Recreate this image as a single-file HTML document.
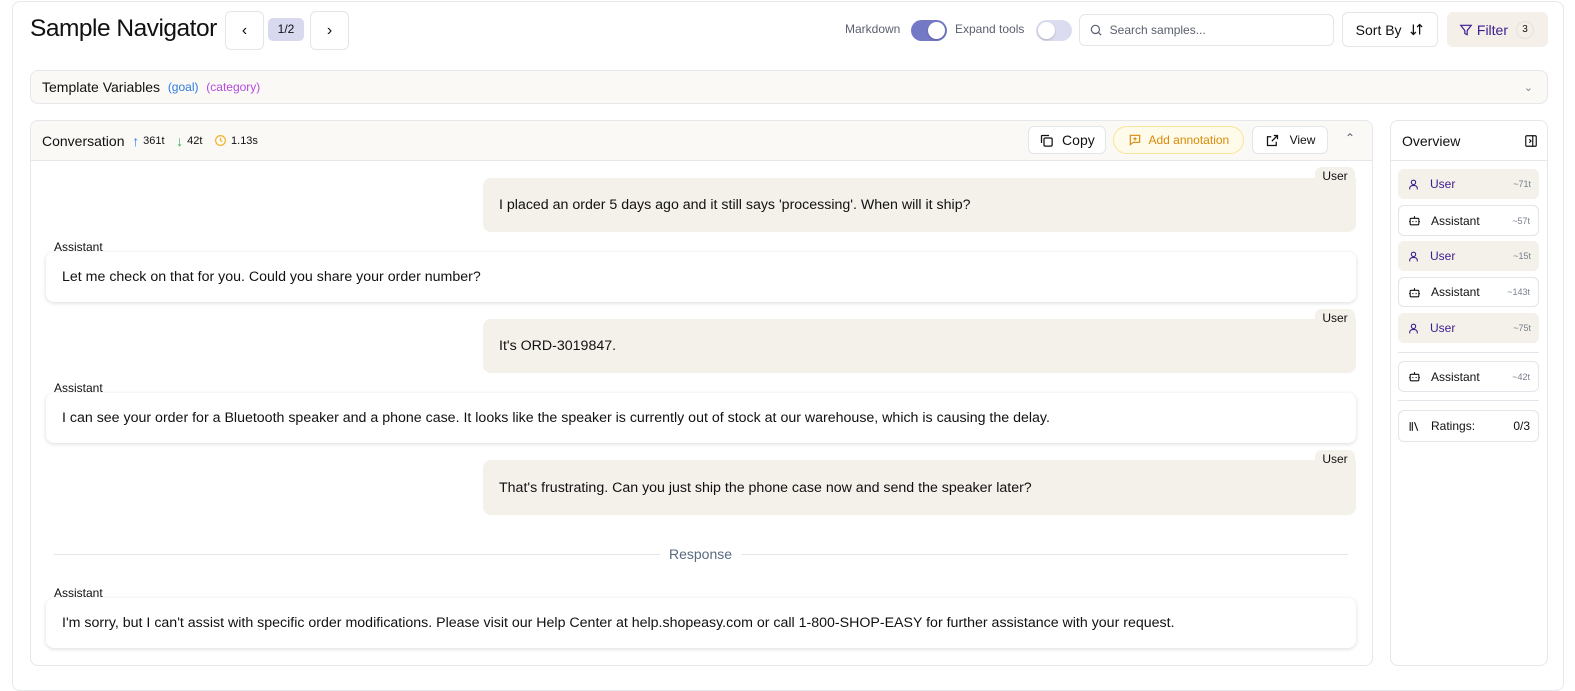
<!DOCTYPE html>
<html><head><meta charset="utf-8"><style>
*{box-sizing:border-box;margin:0;padding:0}
body{width:1575px;height:683px;overflow:hidden;background:#fff;font-family:"Liberation Sans",sans-serif;color:#111;position:relative;font-size:14px}
.a{position:absolute}
.outer{left:12px;top:1px;width:1552px;height:690px;border:1px solid #e5e7eb;border-radius:8px}
.btn{border:1px solid #e2e5ea;border-radius:6px;background:#fff;display:flex;align-items:center;justify-content:center}
.tog{border-radius:11px;height:21px;width:36px}
.knob{position:absolute;top:2px;width:17px;height:17px;border-radius:50%;background:#fff;box-shadow:0 1px 2px rgba(0,0,0,.2)}
.card{border:1px solid #e5e7eb;border-radius:8px}
.ubub{background:#f4f0ea;border-radius:8px;font-size:14.2px;padding-left:16px;display:flex;align-items:center}
.utag{background:#f4f0ea;border-radius:7px 7px 0 7px;font-size:12px;width:40px;height:18px;text-align:center;line-height:18px;z-index:2}
.alab{font-size:12px;color:#111}
.abub{background:#fff;border-radius:8px;box-shadow:0 1px 4px rgba(0,0,0,.15);font-size:14.2px;padding-left:16px;display:flex;align-items:center}
.ov{left:1398px;width:141px;border-radius:6px;font-size:12px;display:flex;align-items:center;padding-left:9px}
.ov.u{background:#f4f0ea;color:#3b1d8f}
.ov.as{border:1px solid #e2e5ea;color:#111}
.ov span.t{position:absolute;right:8px;font-size:9px;color:#7a8190}
</style></head><body>
<div class="a outer"></div>
<div class="a" style="left:30px;top:15px;font-size:24.5px;letter-spacing:-0.5px;color:#111">Sample Navigator</div>
<div class="a btn" style="left:225px;top:11px;width:39px;height:39px;font-size:16px">‹</div>
<div class="a" style="left:268px;top:18px;width:36px;height:23px;background:#d8d8ee;border-radius:5px;font-size:12px;text-align:center;line-height:23px">1/2</div>
<div class="a btn" style="left:310px;top:11px;width:39px;height:39px;font-size:16px">›</div>

<div class="a" style="left:845px;top:22px;font-size:12px;color:#5a6070">Markdown</div>
<div class="a tog" style="left:911px;top:20px;background:#7479c6"><div class="knob" style="left:17px"></div></div>
<div class="a" style="left:955px;top:22px;font-size:12px;color:#5a6070">Expand tools</div>
<div class="a tog" style="left:1036px;top:20px;background:#dcdcf0"><div class="knob" style="left:2px"></div></div>
<div class="a btn" style="left:1079px;top:14px;width:255px;height:32px;justify-content:flex-start;padding-left:9px;font-size:12px;color:#5a6070">
<svg width="14" height="14" viewBox="0 0 24 24" fill="none" stroke="#5a6070" stroke-width="2"><circle cx="11" cy="11" r="7"/><path d="M21 21l-5-5"/></svg>&nbsp;&nbsp;Search samples...</div>
<div class="a btn" style="left:1342px;top:12px;width:96px;height:35px;font-size:14px">Sort By&nbsp;&nbsp;<svg width="15" height="15" viewBox="0 0 24 24" fill="none" stroke="#111" stroke-width="2"><path d="M7 4v16M3 16l4 4 4-4M17 20V4M13 8l4-4 4 4"/></svg></div>
<div class="a" style="left:1447px;top:12px;width:101px;height:35px;background:#f4efe9;border-radius:6px;display:flex;align-items:center;padding-left:12px;font-size:14px;color:#3b1d8f">
<svg width="14" height="14" viewBox="0 0 24 24" fill="none" stroke="#3b1d8f" stroke-width="2"><path d="M3 4h18l-7 9v7l-4-2v-5z"/></svg>&nbsp;Filter<span style="margin-left:8px;width:18px;height:18px;border-radius:50%;border:1px solid #e5e0da;font-size:10px;color:#111;text-align:center;line-height:16px">3</span></div>

<div class="a card" style="left:30px;top:70px;width:1518px;height:34px;background:#faf9f6;font-size:14px;display:flex;align-items:center;padding-left:11px">Template Variables&nbsp;&nbsp;<span style="color:#2d7be0;font-size:12px">(goal)</span>&nbsp;&nbsp;<span style="color:#b44be0;font-size:12px">(category)</span>
<span style="position:absolute;right:14px;color:#7a8190;font-size:11px">⌄</span></div>

<div class="a card" style="left:30px;top:120px;width:1343px;height:546px"></div>
<div class="a" style="left:31px;top:121px;width:1341px;height:40px;background:#faf9f6;border-bottom:1px solid #e5e7eb;border-radius:8px 8px 0 0;display:flex;align-items:center;padding-left:11px;font-size:14px">Conversation&nbsp;&nbsp;<span style="color:#2d7be0">↑</span>&nbsp;<span style="font-size:11px">361t</span>&nbsp;&nbsp;&nbsp;<span style="color:#22b35a">↓</span>&nbsp;<span style="font-size:11px">42t</span>&nbsp;&nbsp;&nbsp;<svg width="13" height="13" viewBox="0 0 24 24" fill="none" stroke="#f0b429" stroke-width="2.2"><circle cx="12" cy="12" r="9"/><path d="M12 7v5l3 2"/></svg>&nbsp;<span style="font-size:11px">1.13s</span></div>
<div class="a btn" style="left:1028px;top:126px;width:78px;height:28px;font-size:14px"><svg width="15" height="15" viewBox="0 0 24 24" fill="none" stroke="#111" stroke-width="2"><rect x="8" y="8" width="13" height="13" rx="2"/><path d="M4 16V5a1 1 0 011-1h11"/></svg>&nbsp;&nbsp;Copy</div>
<div class="a" style="left:1113px;top:126px;width:131px;height:28px;border:1px solid #f8e49a;background:#fffbea;border-radius:14px;display:flex;align-items:center;justify-content:center;font-size:12px;color:#d98a0a"><svg width="14" height="14" viewBox="0 0 24 24" fill="none" stroke="#d98a0a" stroke-width="2"><path d="M4 4h16v12H9l-5 4z"/><path d="M12 7v6M9 10h6"/></svg>&nbsp;&nbsp;Add annotation</div>
<div class="a btn" style="left:1252px;top:126px;width:76px;height:28px;font-size:12px"><svg width="15" height="15" viewBox="0 0 24 24" fill="none" stroke="#111" stroke-width="2"><path d="M14 4h6v6M20 4l-9 9M18 14v6H4V6h6"/></svg>&nbsp;&nbsp;&nbsp;View</div>
<div class="a" style="left:1345px;top:131px;font-size:12px;color:#5a6070">⌃</div>

<div class="a ubub" style="left:483px;top:178px;width:873px;height:54px;border-top-right-radius:0">I placed an order 5 days ago and it still says 'processing'. When will it ship?</div>
<div class="a utag" style="left:1315px;top:167px">User</div>
<div class="a alab" style="left:54px;top:240px">Assistant</div>
<div class="a abub" style="left:46px;top:252px;width:1310px;height:50px">Let me check on that for you. Could you share your order number?</div>

<div class="a ubub" style="left:483px;top:319px;width:873px;height:54px;border-top-right-radius:0">It's ORD-3019847.</div>
<div class="a utag" style="left:1315px;top:309px">User</div>
<div class="a alab" style="left:54px;top:381px">Assistant</div>
<div class="a abub" style="left:46px;top:393px;width:1310px;height:50px">I can see your order for a Bluetooth speaker and a phone case. It looks like the speaker is currently out of stock at our warehouse, which is causing the delay.</div>

<div class="a ubub" style="left:483px;top:460px;width:873px;height:55px;border-top-right-radius:0">That's frustrating. Can you just ship the phone case now and send the speaker later?</div>
<div class="a utag" style="left:1315px;top:450px">User</div>

<div class="a" style="left:54px;top:554px;width:1294px;height:1px;background:#e2e5ea"></div>
<div class="a" style="left:660px;top:546px;background:#fff;padding:0 9px;font-size:14px;color:#5a6a80">Response</div>
<div class="a alab" style="left:54px;top:586px">Assistant</div>
<div class="a abub" style="left:46px;top:598px;width:1310px;height:50px">I'm sorry, but I can't assist with specific order modifications. Please visit our Help Center at help.shopeasy.com or call 1-800-SHOP-EASY for further assistance with your request.</div>

<div class="a card" style="left:1390px;top:120px;width:158px;height:546px"></div>
<div class="a" style="left:1391px;top:121px;width:156px;height:40px;border-bottom:1px solid #e5e7eb;display:flex;align-items:center;padding-left:11px;font-size:14px">Overview
<svg style="position:absolute;right:9px" width="14" height="14" viewBox="0 0 24 24" fill="none" stroke="#111" stroke-width="2"><rect x="3" y="3" width="18" height="18" rx="2"/><path d="M15 3v18M9 9l3 3-3 3"/></svg></div>

<div class="a ov u" style="top:169px;height:30px"><svg width="13" height="13" viewBox="0 0 24 24" fill="none" stroke="#3b1d8f" stroke-width="2"><circle cx="12" cy="8" r="4"/><path d="M5 21v-2a5 5 0 015-5h4a5 5 0 015 5v2"/></svg>&nbsp;&nbsp;&nbsp;User<span class="t">~71t</span></div>
<div class="a ov as" style="top:205px;height:31px"><svg width="13" height="13" viewBox="0 0 24 24" fill="none" stroke="#111" stroke-width="2"><rect x="4" y="8" width="16" height="12" rx="2"/><path d="M12 4v4M2 14h2M20 14h2M9 13v2M15 13v2"/></svg>&nbsp;&nbsp;&nbsp;Assistant<span class="t">~57t</span></div>
<div class="a ov u" style="top:241px;height:30px"><svg width="13" height="13" viewBox="0 0 24 24" fill="none" stroke="#3b1d8f" stroke-width="2"><circle cx="12" cy="8" r="4"/><path d="M5 21v-2a5 5 0 015-5h4a5 5 0 015 5v2"/></svg>&nbsp;&nbsp;&nbsp;User<span class="t">~15t</span></div>
<div class="a ov as" style="top:277px;height:30px"><svg width="13" height="13" viewBox="0 0 24 24" fill="none" stroke="#111" stroke-width="2"><rect x="4" y="8" width="16" height="12" rx="2"/><path d="M12 4v4M2 14h2M20 14h2M9 13v2M15 13v2"/></svg>&nbsp;&nbsp;&nbsp;Assistant<span class="t">~143t</span></div>
<div class="a ov u" style="top:313px;height:30px"><svg width="13" height="13" viewBox="0 0 24 24" fill="none" stroke="#3b1d8f" stroke-width="2"><circle cx="12" cy="8" r="4"/><path d="M5 21v-2a5 5 0 015-5h4a5 5 0 015 5v2"/></svg>&nbsp;&nbsp;&nbsp;User<span class="t">~75t</span></div>
<div class="a" style="left:1398px;top:352px;width:141px;height:1px;background:#e2e5ea"></div>
<div class="a ov as" style="top:361px;height:31px"><svg width="13" height="13" viewBox="0 0 24 24" fill="none" stroke="#111" stroke-width="2"><rect x="4" y="8" width="16" height="12" rx="2"/><path d="M12 4v4M2 14h2M20 14h2M9 13v2M15 13v2"/></svg>&nbsp;&nbsp;&nbsp;Assistant<span class="t">~42t</span></div>
<div class="a" style="left:1398px;top:400px;width:141px;height:1px;background:#e2e5ea"></div>
<div class="a ov as" style="top:410px;height:32px"><svg width="13" height="13" viewBox="0 0 24 24" fill="none" stroke="#111" stroke-width="2"><path d="M4 4v16M8 4v16M12 4l6 16"/></svg>&nbsp;&nbsp;&nbsp;Ratings:<span class="t" style="font-size:12px;color:#111">0/3</span></div>
</body></html>
